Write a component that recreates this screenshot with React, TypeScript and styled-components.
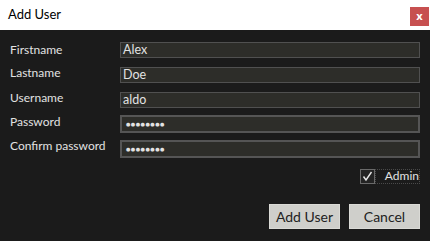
import styled, { createGlobalStyle } from 'styled-components';

const FONT = `Lato, "Open Sans", sans-serif`;

const Colors = {
	bg: '#1b1b1b',
	field: '#2d2d29',
	border: '#505050',
	text: '#e2e2e2',
	button: '#cfcfcb',
	close: '#c75050',
} as const;

const Global = createGlobalStyle`
	html, body {
		margin: 0;
		padding: 0;
		background: ${Colors.bg};
	}
	body {
		font-family: ${FONT};
	}
`;

const Window = styled.div`
	width: 430px;
	height: 241px;
	display: flex;
	flex-direction: column;
	overflow: hidden;
`;

const TitleBar = styled.div`
	height: 30px;
	flex: none;
	background: #fff;
	display: flex;
	align-items: center;
	justify-content: space-between;
	padding: 0 1px 0 8px;
	box-sizing: border-box;
`;

const Title = styled.span`
	font-size: 13px;
	color: #000;
	margin-top: -2px;
`;

const CloseButton = styled.div`
	width: 19px;
	height: 19px;
	margin-top: 3px;
	background: ${Colors.close};
	color: #fff;
	font-family: "Open Sans", sans-serif;
	font-size: 11px;
	font-weight: bold;
	display: flex;
	align-items: center;
	justify-content: center;
	line-height: 1;
	padding-bottom: 2px;
	box-sizing: border-box;
`;

const Body = styled.div`
	flex: 1;
	background: ${Colors.bg};
	padding: 12px 10px 0 10px;
	display: flex;
	flex-direction: column;
`;

const Form = styled.div`
	display: flex;
	flex-direction: column;
`;

const Row = styled.div<{ $h: number }>`
	display: flex;
	height: ${({ $h }) => $h}px;
`;

const Label = styled.div<{ $top: number }>`
	width: 110px;
	font-size: 12px;
	color: ${Colors.text};
	padding-top: ${({ $top }) => $top}px;
	line-height: 1;
	white-space: nowrap;
`;

const Field = styled.div<{ $secret?: boolean }>`
	width: 300px;
	height: ${({ $secret }) => ($secret ? 18 : 16)}px;
	box-sizing: border-box;
	background: ${Colors.field};
	border: ${({ $secret }) => ($secret ? 2 : 1)}px solid
		${({ $secret }) => ($secret ? '#555' : Colors.border)};
	color: ${Colors.text};
	font-size: 12.5px;
	line-height: 1;
	padding-left: 2px;
	display: flex;
	align-items: center;
`;

const Dots = styled.span`
	font-family: "DejaVu Sans", sans-serif;
	font-size: 5px;
	letter-spacing: 0.5px;
	padding: 1px 0 0 2px;
`;

const AdminRow = styled.div`
	display: flex;
	justify-content: flex-end;
	align-items: center;
	margin-top: 11px;
`;

const CheckBox = styled.div`
	width: 15px;
	height: 15px;
	box-sizing: border-box;
	border: 1px solid #6a6a6a;
	background: #232323;
	display: flex;
	align-items: center;
	justify-content: center;
`;

const AdminLabel = styled.span`
	font-size: 12px;
	color: ${Colors.text};
	line-height: 1;
	padding: 0 0 1px 9px;
	border: 1px dotted #4a4a4a;
`;

const Buttons = styled.div`
	display: flex;
	justify-content: flex-end;
	gap: 9px;
	margin-top: 20px;
`;

const Button = styled.div`
	height: 25px;
	width: 71px;
	box-sizing: border-box;
	background: ${Colors.button};
	border: 1px solid #dadad6;
	color: #222;
	font-size: 14px;
	display: flex;
	align-items: center;
	justify-content: center;
`;

const rows = [
	{ label: 'Firstname', value: 'Alex', h: 25, top: 2 },
	{ label: 'Lastname', value: 'Doe', h: 25, top: 0 },
	{ label: 'Username', value: 'aldo', h: 23, top: 0 },
	{ label: 'Password', value: '', h: 25, top: 1, secret: true },
	{ label: 'Confirm password', value: '', h: 18, top: 0, secret: true },
];

export default function App() {
	return (
		<Window>
			<Global />
			<TitleBar>
				<Title>Add User</Title>
				<CloseButton>x</CloseButton>
			</TitleBar>
			<Body>
				<Form>
					{rows.map((r) => (
						<Row key={r.label} $h={r.h}>
							<Label $top={r.top}>{r.label}</Label>
							<Field $secret={r.secret}>
								{r.secret ? <Dots>●●●●●●●●</Dots> : r.value}
							</Field>
						</Row>
					))}
				</Form>
				<AdminRow>
					<CheckBox>
						<svg width="11" height="11" viewBox="0 0 11 11">
							<path
								d="M1.5 5.5 L4 9 L9.5 1"
								fill="none"
								stroke="#e8e8e8"
								strokeWidth="1.4"
							/>
						</svg>
					</CheckBox>
					<AdminLabel>Admin</AdminLabel>
				</AdminRow>
				<Buttons>
					<Button>Add User</Button>
					<Button>Cancel</Button>
				</Buttons>
			</Body>
		</Window>
	);
}
